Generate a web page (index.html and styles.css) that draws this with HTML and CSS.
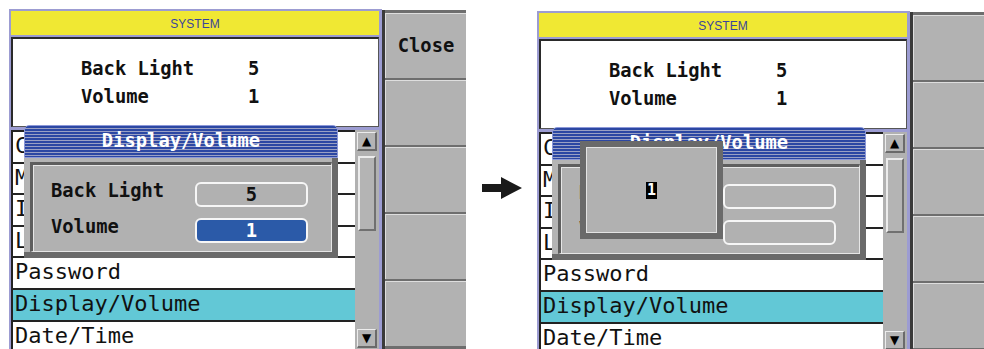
FILE: index.html
```html
<!DOCTYPE html>
<html lang="en">
<head>
    <meta charset="UTF-8">
    <title>System - Display/Volume</title>
    <link rel="stylesheet" href="styles.css">
</head>
<body>
<div class="stage">
    <div class="screen">
        <div class="main">
            <div class="head">SYSTEM</div>
            <div class="info">
                <div class="info-row"><span class="info-label">Back Light</span><span>5</span></div>
                <div class="info-row"><span class="info-label">Volume</span><span>1</span></div>
            </div>
            <div class="list">
                <ul class="rows">
                    <li>Calibration</li>
                    <li>Memory</li>
                    <li>Initialize</li>
                    <li>Language</li>
                    <li>Password</li>
                    <li class="row-selected">Display/Volume</li>
                    <li>Date/Time</li>
                </ul>
                <div class="scroll">
                    <span class="scroll-btn">&#9650;</span>
                    <span class="thumb"></span>
                    <span class="scroll-btn down">&#9660;</span>
                </div>
            </div>
            <div class="dialog">
                <div class="dlg-title">Display/Volume</div>
                <div class="dlg-body">
                    <div class="dlg-panel">
                        <div class="field-row"><span class="field-label">Back Light</span><span class="field">5</span></div>
                        <div class="field-row"><span class="field-label">Volume</span><span class="field field-on">1</span></div>
                    </div>
                </div>
            </div>
        </div>
        <div class="side">
            <div class="key">Close</div>
            <div class="key"></div>
            <div class="key"></div>
            <div class="key"></div>
            <div class="key"></div>
        </div>
    </div>

    <svg class="arrow" width="40" height="22" viewBox="0 0 40 22">
        <path d="M0 7 H19 V0 L40 11 L19 22 V15 H0 Z" fill="#1a1a1a"/>
    </svg>

    <div class="screen screen-low">
        <div class="main">
            <div class="head">SYSTEM</div>
            <div class="info">
                <div class="info-row"><span class="info-label">Back Light</span><span>5</span></div>
                <div class="info-row"><span class="info-label">Volume</span><span>1</span></div>
            </div>
            <div class="list">
                <ul class="rows">
                    <li>Calibration</li>
                    <li>Memory</li>
                    <li>Initialize</li>
                    <li>Language</li>
                    <li>Password</li>
                    <li class="row-selected">Display/Volume</li>
                    <li>Date/Time</li>
                </ul>
                <div class="scroll">
                    <span class="scroll-btn">&#9650;</span>
                    <span class="thumb"></span>
                    <span class="scroll-btn down">&#9660;</span>
                </div>
            </div>
            <div class="dialog">
                <div class="dlg-title">Display/Volume</div>
                <div class="dlg-body">
                    <div class="dlg-panel">
                        <div class="field-row"><span class="field-label">Back Light</span><span class="field"></span></div>
                        <div class="field-row"><span class="field-label">Volume</span><span class="field"></span></div>
                    </div>
                </div>
                <div class="popup"><span class="cursor">1</span></div>
            </div>
        </div>
        <div class="side">
            <div class="key"></div>
            <div class="key"></div>
            <div class="key"></div>
            <div class="key"></div>
            <div class="key"></div>
        </div>
    </div>
</div>
</body>
</html>
```

FILE: styles.css
```css
* {
    padding: 0;
    margin: 0;
    box-sizing: border-box;
}

body {
    background: #ffffff;
    width: 984px;
    height: 349px;
    overflow: hidden;
    font-family: "DejaVu Sans Mono", "Liberation Mono", monospace;
    color: #111111;
}

.stage {
    display: flex;
    align-items: flex-start;
    padding-left: 9px;
    width: 1100px;
}

.screen {
    display: flex;
    flex: none;
    margin-top: 9px;
    height: 340px;
}

.screen-low {
    margin-top: 11px;
}

.arrow {
    flex: none;
    margin: 177px 15px 0 16px;
}

/* left part: header, info, list */
.main {
    position: relative;
    width: 373px;
    height: 100%;
    background: #9c9cd2;
    border-top: 2px solid #9c9cd2;
    border-left: 2px solid #9c9cd2;
    padding-right: 3px;
    display: flex;
    flex-direction: column;
}

.head {
    height: 24px;
    background: #f0e833;
    text-align: center;
    font-family: "Liberation Sans", Arial, sans-serif;
    font-size: 12px;
    line-height: 26px;
    color: #3a449c;
}

.info {
    height: 90px;
    margin-top: 2px;
    background: #ffffff;
    border-top: 2px solid #2a2a2a;
    border-left: 2px solid #2a2a2a;
    border-right: 1px solid #555555;
    border-bottom: 1px solid #555555;
    padding: 16px 0 0 68px;
    font-weight: bold;
    font-size: 18.8px;
}

.info-row {
    display: flex;
    height: 28px;
    line-height: 28px;
}

.info-label {
    width: 167px;
}

.list {
    flex: 1;
    margin-top: 3px;
    display: flex;
    overflow: hidden;
}

.rows {
    width: 344px;
    list-style: none;
    background: #ffffff;
}

.rows li {
    height: 31.6px;
    border-top: 2px solid #222222;
    border-left: 2px solid #222222;
    padding-left: 2px;
    font-size: 22px;
    line-height: 28px;
    white-space: nowrap;
    overflow: hidden;
}

.rows .row-selected {
    background: #62c8d6;
}

.scroll {
    width: 24px;
    background: #b1b1b1;
    display: flex;
    flex-direction: column;
    align-items: flex-start;
}

.scroll-btn {
    width: 20px;
    height: 19px;
    margin: 2px 0 0 2px;
    background: #b4b4b4;
    border-top: 1px solid #ececec;
    border-left: 1px solid #ececec;
    border-right: 2px solid #6a6a6a;
    border-bottom: 2px solid #6a6a6a;
    font-size: 12px;
    line-height: 16px;
    text-align: center;
    color: #000000;
    font-family: "DejaVu Sans", sans-serif;
}

.scroll-btn.down {
    margin-top: auto;
    margin-bottom: 1px;
}

.thumb {
    width: 18px;
    height: 75px;
    margin: 5px 0 0 3px;
    background: #b4b4b4;
    border-top: 2px solid #ececec;
    border-left: 2px solid #ececec;
    border-right: 2px solid #707070;
    border-bottom: 2px solid #707070;
}

/* right key column */
.side {
    width: 84px;
    height: 100%;
    margin-top: 1px;
    background: #6e6e6e;
    border-left: 3px solid #3a3a3a;
    padding-top: 3px;
    display: flex;
    flex-direction: column;
    gap: 2px;
}

.key {
    height: 65px;
    flex: none;
    background: #b2b2b2;
    border-top: 1px solid #dedede;
    border-left: 1px solid #dedede;
    text-align: center;
    font-weight: bold;
    font-size: 18.8px;
    line-height: 63px;
}

/* Display/Volume dialog */
.dialog {
    position: absolute;
    left: 13px;
    top: 114px;
    width: 314px;
}

.dlg-title {
    height: 33px;
    border: 1px solid #8c98d8;
    border-radius: 5px 5px 0 0;
    background: repeating-linear-gradient(to bottom, #2c47a3 0, #2c47a3 2px, #9aa0c4 2px, #9aa0c4 3px);
    color: #ffffff;
    font-weight: bold;
    font-size: 18.8px;
    line-height: 30px;
    text-align: center;
}

.dlg-body {
    height: 100px;
    background: #b4b4b4;
    border-right: 6px solid #6a6a6a;
    border-bottom: 6px solid #6a6a6a;
    padding: 4px 0 0 6px;
}

.dlg-panel {
    height: 100%;
    background: #b1b1b1;
    border-top: 3px solid #5e5e5e;
    border-left: 3px solid #5e5e5e;
    border-right: 1px solid #e6e6e6;
    border-bottom: 1px solid #e6e6e6;
    box-shadow: inset 1px 1px 0 #e6e6e6;
    padding: 17px 0 0 18px;
}

.field-row {
    display: flex;
    align-items: flex-start;
    height: 25px;
    margin-bottom: 11px;
}

.field-label {
    width: 144px;
    font-weight: bold;
    font-size: 18.8px;
    line-height: 17px;
}

.field {
    width: 113px;
    height: 25px;
    border: 2px solid #f6f6f6;
    border-radius: 6px;
    background: #b1b1b1;
    text-align: center;
    font-weight: bold;
    font-size: 18.8px;
    line-height: 21px;
}

.field-on {
    background: #2b5aa8;
    color: #ffffff;
}

/* numeric entry popup */
.popup {
    position: absolute;
    left: 28px;
    top: 14px;
    width: 143px;
    height: 98px;
    background: #b1b1b1;
    border: 6px solid #6a6a6a;
    box-shadow: inset 0 0 0 1px #e4e4e4;
    display: flex;
    align-items: center;
    justify-content: center;
}

.cursor {
    width: 11px;
    height: 17px;
    background: #000000;
    color: #ffffff;
    font-weight: bold;
    font-size: 15px;
    line-height: 17px;
    text-align: center;
}
```
